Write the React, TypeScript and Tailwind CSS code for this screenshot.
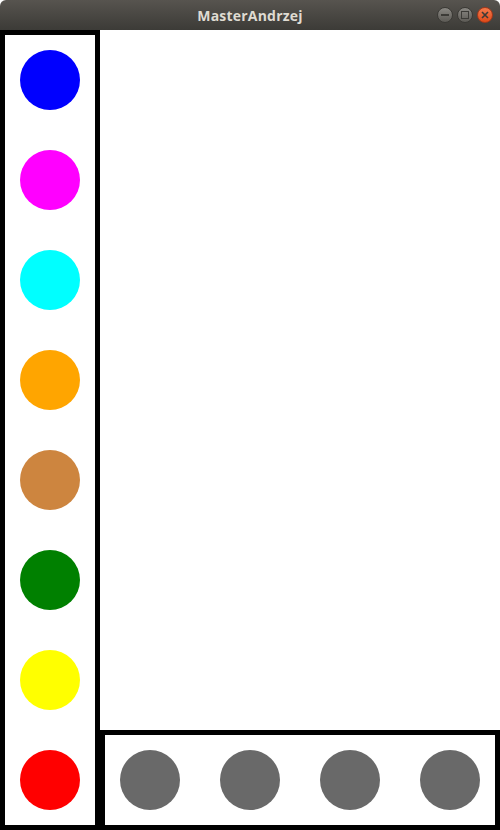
const palette = [
  "bg-[#0000ff]",
  "bg-[#ff00ff]",
  "bg-[#00ffff]",
  "bg-[#ffa500]",
  "bg-[#cd853f]",
  "bg-[#008000]",
  "bg-[#ffff00]",
  "bg-[#ff0000]",
];

const Peg: React.FC<{ color: string }> = ({ color }) => (
  <div className={`w-[60px] h-[60px] rounded-full shrink-0 ${color}`} />
);

export default function App() {
  return (
    <div className="w-[500px] h-[830px] flex flex-col bg-white overflow-hidden">
      {/* Window title bar */}
      <div className="h-[30px] shrink-0 relative flex items-center justify-center rounded-t-[6px] bg-gradient-to-b from-[#57544f] to-[#3c3b37]">
        <span
          className="text-[14px] font-bold text-[#dfdbd2] tracking-[0.2px]"
          style={{ fontFamily: '"Open Sans", "DejaVu Sans", sans-serif' }}
        >
          MasterAndrzej
        </span>
        <div className="absolute right-[7px] top-[7px] flex gap-[4px]">
          <div className="w-[16px] h-[16px] rounded-full bg-gradient-to-b from-[#8a8883] to-[#5c5a55] border border-[#3a3935] flex items-center justify-center">
            <div className="w-[8px] h-[2px] bg-[#3c3b37]" />
          </div>
          <div className="w-[16px] h-[16px] rounded-full bg-gradient-to-b from-[#8a8883] to-[#5c5a55] border border-[#3a3935] flex items-center justify-center">
            <div className="w-[8px] h-[8px] border-[1.5px] border-[#3c3b37]" />
          </div>
          <div className="w-[16px] h-[16px] rounded-full bg-gradient-to-b from-[#f47a4b] to-[#df4a16] border border-[#a6381a] flex items-center justify-center">
            <svg width="8" height="8" viewBox="0 0 8 8">
              <path d="M1 1 L7 7 M7 1 L1 7" stroke="#3c3b37" strokeWidth="1.6" />
            </svg>
          </div>
        </div>
      </div>

      <div className="flex flex-1 min-h-0">
        {/* Colour palette */}
        <div className="w-[100px] h-full border-[5px] border-black flex flex-col items-center pt-[15px] gap-[40px]">
          {palette.map((c) => (
            <Peg key={c} color={c} />
          ))}
        </div>

        <div className="flex-1 flex flex-col">
          {/* Board */}
          <div className="flex-1" />
          {/* Current guess */}
          <div className="h-[100px] border-[5px] border-black flex items-center px-[15px] gap-[40px]">
            {[0, 1, 2, 3].map((i) => (
              <Peg key={i} color="bg-[#696969]" />
            ))}
          </div>
        </div>
      </div>
    </div>
  );
}
